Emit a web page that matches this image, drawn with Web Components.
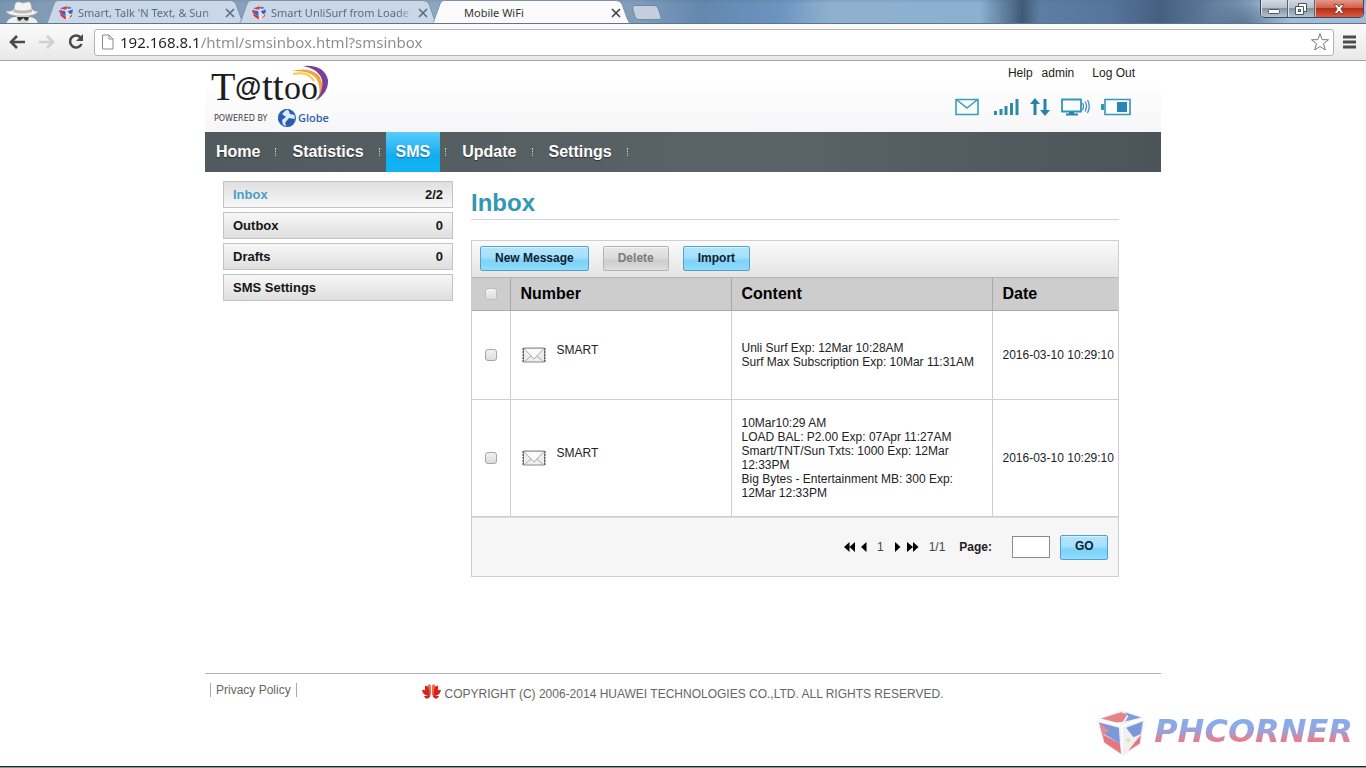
<!DOCTYPE html>
<html lang="en">
<head>
<meta charset="utf-8">
<title>Mobile WiFi</title>
<style>
  body { margin: 0; background: #fff; color: #222; font: 12px/14px "Liberation Sans", Arial, sans-serif; }
</style>
</head>
<body>
<wifi-window></wifi-window>

<script>
const define = (name, html, setup) => {
  const template = document.createElement('template');
  template.innerHTML = `<style>*{box-sizing:border-box} a{color:inherit;text-decoration:none} svg{display:block} button,input{font:inherit;margin:0}</style>` + html;
  customElements.define(name, class extends HTMLElement {
    constructor() {
      super();
      this.attachShadow({ mode: 'open' }).append(template.content.cloneNode(true));
      if (setup) setup.call(this, this.shadowRoot);
    }
  });
};

/* ---------- shared pieces ---------- */

define('cube-icon', `
<style>:host{display:block;width:16px;height:16px;flex:none} svg{width:100%;height:100%}</style>
<svg viewBox="0 0 48 46" aria-hidden="true">
  <path d="M1 9 24 1 47 8 26 15Z" fill="#e8edf6"/>
  <path d="M5 9 24 3 30 5 26 12 20 13Z" fill="#d8404c"/><path d="M28 3 43 8 28 12 31 7Z" fill="#3a6ad0"/>
  <path d="M1 11 24 17 26 45 7 33Z" fill="#e8edf6"/>
  <path d="M3 13 22 18 23 33 6 23Z" fill="#3562c8"/><path d="M6 24 23 33 24 43 8 32Z" fill="#d8303c"/><path d="M3 13 13 21 6 25Z" fill="#d84c58"/>
  <path d="M26 17 47 10 43 34 26 45Z" fill="#e6e9ec"/>
  <path d="M29 18 45 12 43 24 36 27Z" fill="#3562c8"/><path d="M38 31 43 25 42 33 31 40Z" fill="#d8303c"/>
  <circle cx="31" cy="30" r="2" fill="#c8dc70"/>
</svg>`);

define('gloss-button', `
<style>
  :host{display:inline-block}
  button{width:100%;height:25px;padding:0 14px 2px;border:1px solid #4ea3cf;border-radius:2px;font-weight:bold;color:#10212e;
    background:linear-gradient(#b4e5fc 0,#a4e0fc 45%,#7dd2f8 60%,#90dcfc 100%);white-space:nowrap;box-shadow:inset 0 1px #d8f1fb}
  button:disabled{color:#7c7c7c;border-color:#b4b4b4;background:linear-gradient(#e8e8e8,#dadada 50%,#cdcdcd 60%,#dedede);box-shadow:inset 0 1px #f4f4f4}
</style>
<button type="button"><slot></slot></button>`, function (root) {
  root.querySelector('button').disabled = this.hasAttribute('disabled');
});

/* ---------- browser frame ---------- */

define('browser-tab', `
<style>
  :host{display:flex;align-items:center;position:relative;width:202px;height:24px;margin-right:-9px;padding:2px 10px 0 14px;
    font:11px/16px "Noto Sans","Open Sans",sans-serif;color:#5c6b7e;z-index:0}
  .shape{position:absolute;inset:0;width:100%;height:100%;z-index:-1}
  .s{fill:#c9d7e8;stroke:#7f93a9}
  .label{flex:1;margin-left:4px;overflow:hidden;white-space:nowrap;-webkit-mask:linear-gradient(90deg,#000 92%,#0004)}
  button{border:0;background:none;padding:0;width:12px;height:12px;margin-left:8px;color:#5f6f80}
  :host([active]){color:#333;z-index:1}
  :host([active]) .s{fill:#fbfbfb;stroke:#7c93ab}
  :host([active]) button{color:#444}
  :host([active]) cube-icon{display:none}
  :host([active]) .label{margin-left:20px;-webkit-mask:none}
</style>
<svg class="shape" viewBox="0 0 202 24" preserveAspectRatio="none" aria-hidden="true"><path class="s" d="M0 24.500C4 24 4 20 6 15L10 4Q11 .5 14 .5H186Q190 .5 192 4L197 18Q199 24 202 24.500"/></svg>
<cube-icon></cube-icon>
<span class="label"><slot></slot></span>
<button type="button" aria-label="Close tab"><svg width="12" height="12" viewBox="0 0 12 12"><path d="M2 2 10 10M10 2 2 10" stroke="currentColor" stroke-width="1.700"/></svg></button>`);

define('window-controls', `
<style>
  :host{display:flex;width:104px;height:18px;border:1px solid #3d4756;border-top:0;border-radius:0 0 5px 5px;overflow:hidden}
  button{flex:0 0 27px;padding:0;border:0;border-right:1px solid #59636f;display:grid;place-items:center;
   background:linear-gradient(#d2d9e0 0,#b7c0ca 45%,#8793a1 50%,#b4c3d2);box-shadow:inset 1px 0 #dbe3eb}
  button:last-child{flex:1;border:0;background:linear-gradient(#e39a8a 0,#d3604c 45%,#b82c18 50%,#d65c3c);box-shadow:inset 1px 0 #eab0a0}
</style>
<button type="button" aria-label="Minimize"><svg width="14" height="14"><rect x="1.500" y="7.500" width="11" height="4" rx="1" fill="#fff" stroke="#4c5663"/></svg></button>
<button type="button" aria-label="Restore"><svg width="14" height="14"><path d="M4.500 1.500H12.500V9.500H9.500V12.500H1.500V4.500H4.500Z" fill="#fff" stroke="#4c5663"/><path d="M4.500 4.500H9.500V9.500" fill="none" stroke="#4c5663"/><rect x="4.500" y="7.500" width="2" height="2" fill="#aab4bf" stroke="#4c5663"/></svg></button>
<button type="button" aria-label="Close"><svg width="16" height="14"><path d="M3 2.500h3L8 5l2-2.500h3L9.800 7l3.200 4.500h-3L8 9l-2 2.500H3L6.200 7Z" fill="#fff" stroke="#6b2c26" stroke-width=".8"/></svg></button>`);

define('tab-strip', `
<style>
  :host{display:flex;height:24px;position:relative;overflow:hidden;
    background:linear-gradient(#4d647e30,transparent 15%),
    radial-gradient(ellipse 50px 30px at 1240px 24px,#5d7591,transparent),
    linear-gradient(90deg,#7995b0 0,#829cb8 40px,#8ca7c2 440px,#7f9dbb 640px,#6487ae 700px,#6b94bf 780px,#8fb1d0 830px,#8bb0d0 980px,#53708f 1012px,#3f5973 1022px,#5d7ea4 1040px,#56759b 1110px,#465f80 1160px,#587596 1200px,#7796b7 1235px,#a0bfdc 1262px,#9fbddb);
    border-bottom:1px solid #60758c}
  .hat{width:44px;flex:none}
  .new{border:0;padding:0;background:none;width:36px;height:18px;margin:4px 0 0 7px;position:relative}
  window-controls{margin-left:auto;margin-right:2px}
</style>
<svg class="hat" height="24" viewBox="0 0 44 24" aria-hidden="true">
  <path d="M6 24Q8 18 14 17H30Q37 18 38 24Z" fill="#f1f1ee"/><path d="M16 14H29V22L23 24 17 22Z" fill="#d9d8d2"/>
  <path d="M6 11Q12 12 14 9L15 4Q16 1 20 2L23 3 27 2Q30 1 31 4L32 9Q34 12 38 11 37 16 22 16T6 11Z" fill="#f4f3ef" stroke="#99a0a6" stroke-width=".6"/>
  <path d="M14 9Q22 12 32 9V12Q22 15 13 12Z" fill="#b9babb"/>
  <path d="M17 17H29L28 20Q26 22 24 19L23 18 22 19Q20 22 18 20Z" fill="#33373b"/>
</svg>
<browser-tab>Smart, Talk 'N Text, &amp; Sun</browser-tab>
<browser-tab>Smart UnliSurf from Loade</browser-tab>
<browser-tab active>Mobile WiFi</browser-tab>
<button class="new" type="button" aria-label="New tab"><svg width="36" height="18"><path d="M2.500 4Q2 1.500 5 1.500H24Q27 1.500 28 4L31 13Q32 15.500 29 15.500H9Q6 15.500 5 13Z" fill="#c3cfdf" stroke="#71879e"/></svg></button>
<window-controls></window-controls>`);

define('address-bar', `
<style>
  :host{display:flex;align-items:center;height:37px;padding:0 7px 0 8px;border-bottom:1px solid #a5a5a5;background:linear-gradient(#fbfbfb,#e9e9e9)}
  button{border:0;background:none;padding:0;width:20px;height:20px;flex:none}
  .nav{display:flex;gap:9px;width:86px}
  .box{flex:1;display:flex;align-items:center;height:27px;padding:0 3px 0 6px;border:1px solid #b4b4b4;border-radius:3px;background:#fff}
  input{flex:1;min-width:0;height:24px;border:0;outline:0;padding:0;margin-left:6px;font:15px/24px "Noto Sans","Open Sans",sans-serif;
    color:transparent;background:linear-gradient(90deg,#222 79px,#8b8b8b 79px);-webkit-background-clip:text;background-clip:text}
  .menu{margin-left:5px}
</style>
<div class="nav">
  <button type="button" aria-label="Back"><svg width="20" height="20"><path d="M17 10H3M9 4 3 10 9 16" fill="none" stroke="#4a4a4a" stroke-width="2.600"/></svg></button>
  <button type="button" aria-label="Forward"><svg width="20" height="20"><path d="M2 10H16M10 4 16 10 10 16" fill="none" stroke="#cfcfcf" stroke-width="2.600"/></svg></button>
  <button type="button" aria-label="Reload"><svg width="20" height="20"><path d="M14.500 5.500A6 6 0 1 0 15.500 12" fill="none" stroke="#4a4a4a" stroke-width="2.600"/><path d="M17 2V9H10Z" fill="#4a4a4a"/></svg></button>
</div>
<div class="box">
  <svg width="13" height="16"><path d="M1.500 1H8L12 5V15H1.500ZM8 1V5H12" fill="#fff" stroke="#8a8a8a"/></svg>
  <input type="text" aria-label="Address" value="192.168.8.1/html/smsinbox.html?smsinbox" spellcheck="false">
  <button type="button" aria-label="Bookmark this page"><svg width="20" height="20"><path d="M10 1.500 12.200 7.600 18.500 7.800 13.500 11.700 15.300 18 10 14.400 4.700 18 6.500 11.700 1.500 7.800 7.800 7.600Z" fill="#fff" stroke="#777"/></svg></button>
</div>
<button class="menu" type="button" aria-label="Menu"><svg width="20" height="20"><path d="M4 5H17M4 10H17M4 15H17" stroke="#4c4c4c" stroke-width="3"/></svg></button>`);

/* ---------- device page ---------- */

define('tattoo-logo', `
<style>:host{display:block}</style>
<svg width="124" height="66" viewBox="0 0 124 66" role="img" aria-label="Tattoo powered by Globe">
  <path d="M80 6Q101 1 109 12 115 24 107 36 111 22 105 13 98 5 80 6Z" fill="#f0a43c"/>
  <path d="M92 1Q113 -1 117 15 118 28 104 36 113 26 111 15 108 4 92 1Z" fill="#7c3f98"/>
  <path d="M82 9Q97 6 103 16" fill="none" stroke="#f5cb4a" stroke-width="2"/>
  <g fill="#1d1d1f" font-family="Liberation Serif,serif"><text x="0" y="35" font-size="40">T</text><text x="24" y="31" font-family="Liberation Sans,sans-serif" font-weight="bold" font-size="27">@</text><text x="51" y="35" font-size="39">tt</text><text x="73" y="34" font-size="34">oo</text></g>
  <text x="3" y="56" font-family="DejaVu Sans,sans-serif" font-size="8" fill="#444">POWERED BY</text>
  <circle cx="76" cy="53" r="9" fill="#dce9f7"/>
  <path d="M76 44A9 9 0 0 0 68 57L72 60 71 55 75 52 71 49ZM77 44 79 49 84 50A9 9 0 0 0 77 44ZM78 53 84 54Q83 61 76 62L74 58Z" fill="#2c5cae"/>
  <circle cx="76" cy="53" r="8.500" fill="none" stroke="#3565b4" stroke-width="1.200"/>
  <text x="87" y="57" font-family="Open Sans,sans-serif" font-size="11" font-weight="600" fill="#2b62a8">Globe</text>
</svg>`);

define('status-icons', `
<style>:host{display:flex;align-items:center;height:20px} svg{margin-left:14px} .near{margin-left:11px}</style>
<svg width="24" height="18" viewBox="0 0 24 18" role="img" aria-label="Messages"><path d="M1 1.500H23V16.500H1ZM2 2 12 10 22 2" fill="none" stroke="#3a9fba" stroke-width="1.600"/></svg>
<svg width="26" height="18" viewBox="0 0 26 18" role="img" aria-label="Signal"><path d="M2.500 17V13M8 17V11M13 17V8M18.500 17V5M24 17V1" stroke="#2e89ab" stroke-width="3"/></svg>
<svg class="near" width="20" height="18" viewBox="0 0 20 18" role="img" aria-label="Traffic"><path d="M5 0 10 6H6.500V17H3.500V6H0ZM15 18 10 12H13.500V1H16.500V12H20Z" fill="#2584ac"/></svg>
<svg class="near" width="29" height="18" viewBox="0 0 29 18" role="img" aria-label="WiFi clients"><path d="M1 1.500H20V13.500H1Z" fill="none" stroke="#2f97b8" stroke-width="1.800"/><path d="M8 14H13V15.500H17V17.500H5V15.500H8Z" fill="#2584ac"/><path d="M21.500 5Q23.500 8 21.500 12M24 3.500Q27 8 24 13.500M26.500 2Q30 8 26.500 15" fill="none" stroke="#3a8fc0" stroke-width="1.300"/></svg>
<svg class="near" width="30" height="18" viewBox="0 0 30 18" role="img" aria-label="Battery"><path d="M4 1.500H29V16.500H4Z" fill="#fff" stroke="#2f97b8" stroke-width="1.600"/><path d="M0 6H3V12H0Z" fill="#2f97b8"/><path d="M16 4H26V14H16Z" fill="#2a86b4"/></svg>`);

define('page-header', `
<style>
  :host{display:flex;justify-content:space-between;height:71px;padding:4px 26px 0 6px;background:linear-gradient(#fff 30%,#f6f6f8)}
  .side{display:flex;flex-direction:column;align-items:flex-end;gap:16px;padding-top:1px}
  nav{display:flex;gap:9px;color:#222;line-height:15px} nav a:last-child{margin-left:9px}
  status-icons{margin-right:4px}
</style>
<tattoo-logo></tattoo-logo>
<div class="side">
  <nav><a href="#help">Help</a><a href="#admin">admin</a><a href="#logout">Log Out</a></nav>
  <status-icons></status-icons>
</div>`);

define('main-nav', `
<style>
  :host{display:flex;height:40px;padding-left:1px;background:linear-gradient(90deg,#515b5e,#5a6466 60%,#4b5558)}
  a{display:flex;align-items:center;padding:0 10px;font:bold 16px/20px "Liberation Sans",Arial,sans-serif;color:#fff;text-shadow:0 1px 1px #222c}
  a.on{background:linear-gradient(#5accfb,#12adf0 60%,#0fb4f5);text-shadow:0 1px 1px #1b6d99}
  i{width:12px;padding-left:5px;display:flex;align-items:center}
  i::before{content:"";height:8px;border-left:1px dotted #ccd2d3}
</style>
<a href="#home">Home</a><i></i><a href="#statistics">Statistics</a><i></i><a class="on" href="#sms">SMS</a><i></i><a href="#update">Update</a><i></i><a href="#settings">Settings</a><i></i>`);

define('side-menu', `
<style>
  :host{display:flex;flex-direction:column;gap:4px;width:230px;flex:none}
  a{display:flex;justify-content:space-between;align-items:center;height:27px;padding:0 9px;border:1px solid #c3c3c3;
    background:linear-gradient(#f7f7f7,#dedede);font-size:13px;font-weight:bold;color:#151515}
  .on{background:linear-gradient(#dfdfdf,#f8f8f8)} .on span{color:#4b9fc4}
</style>
<a class="on" href="#inbox"><span>Inbox</span><b>2/2</b></a>
<a href="#outbox"><span>Outbox</span><b>0</b></a>
<a href="#drafts"><span>Drafts</span><b>0</b></a>
<a href="#sms-settings"><span>SMS Settings</span></a>`);

const envelope = `<svg class="mail" width="24" height="16" viewBox="0 0 24 16" role="img" aria-label="Read message"><path d="M1.500 1H22.500V15H1.500Z" fill="#ededed" stroke="#8a8a8a"/><path d="M2 1.500 12 12 22 1.500Z" fill="#fafafa" stroke="#aaa"/><path d="M2 15 9 9M22 15 15 9" stroke="#aaa"/><path d="M1 1V16M23 1V16" stroke="#444" stroke-dasharray="2 1"/></svg>`;

define('message-table', `
<style>
  :host{display:block}
  table{width:100%;table-layout:fixed;border-collapse:collapse}
  th,td{padding:0 0 0 10px;text-align:left;border-left:1px solid #cfcfcf;border-bottom:1px solid #cfcfcf}
  th:first-child,td:first-child{border-left:0;padding:0;text-align:center}
  th{height:33px;font-size:16px;line-height:20px;color:#000;background:#cdcdcd;border-color:#a9a9a9;border-top:1px solid #b5b5b5}
  td{height:89px} tr.tall td{height:117px}
  td:nth-child(3){padding-right:9px} td:last-child{white-space:nowrap}
  .pick{width:38px} .num{width:221px} .txt{width:261px}
  input{appearance:none;display:block;margin:0 auto;width:12px;height:12px;border:1px solid #a6a6a6;border-radius:3px;background:linear-gradient(#f2f2f2,#dcdcdc)}
  th input{border-color:#bdbdbd}
  .from{display:flex;align-items:center;gap:11px;padding-left:1px} .from span{padding-bottom:10px}
</style>
<table>
  <colgroup><col class="pick"><col class="num"><col class="txt"><col></colgroup>
  <thead><tr><th><input type="checkbox" aria-label="Select all"></th><th>Number</th><th>Content</th><th>Date</th></tr></thead>
  <tbody>
    <tr><td><input type="checkbox" aria-label="Select message 1"></td><td><div class="from">${envelope}<span>SMART</span></div></td>
      <td>Unli Surf Exp: 12Mar 10:28AM<br>Surf Max Subscription Exp: 10Mar 11:31AM</td><td>2016-03-10 10:29:10</td></tr>
    <tr class="tall"><td><input type="checkbox" aria-label="Select message 2"></td><td><div class="from">${envelope}<span>SMART</span></div></td>
      <td>10Mar10:29 AM<br>LOAD BAL: P2.00 Exp: 07Apr 11:27AM<br>Smart/TNT/Sun Txts: 1000 Exp: 12Mar 12:33PM<br>Big Bytes - Entertainment MB: 300 Exp: 12Mar 12:33PM</td><td>2016-03-10 10:29:10</td></tr>
  </tbody>
</table>`);

define('page-switcher', `
<style>
  :host{display:flex;align-items:center;justify-content:flex-end;height:59px;padding:0 10px;background:#f6f6f6;border-top:1px solid #dadada;color:#444}
  button{border:0;background:none;padding:0;margin-right:6px}
  .cur{margin:0 10px 0 4px} .total{margin:0 14px 0 4px}
  label{font-weight:bold;color:#222;margin-right:20px}
  input{width:38px;height:22px;border:1px solid #8c8c8c;background:#fff;padding:0 4px;margin-right:10px}
  gloss-button{width:48px}
</style>
<button type="button" aria-label="First page"><svg width="11" height="10"><path d="M5.500 0V10L0 5ZM11 0V10L5.500 5Z"/></svg></button>
<button type="button" aria-label="Previous page"><svg width="6" height="10"><path d="M5.500 0V10L0 5Z"/></svg></button>
<span class="cur">1</span>
<button type="button" aria-label="Next page"><svg width="7" height="10"><path d="M1 0V10L6.500 5Z"/></svg></button>
<button type="button" aria-label="Last page"><svg width="12" height="10"><path d="M0 0V10L6 5ZM6 0V10L11.500 5Z"/></svg></button>
<span class="total">1/1</span>
<label for="page">Page:</label><input id="page" type="text">
<gloss-button>GO</gloss-button>`);

define('inbox-panel', `
<style>
  :host{display:block;flex:1;min-width:0}
  h1{margin:0 0 20px;padding:8px 0 2px;font-size:24px;line-height:28px;color:#3298b2;border-bottom:1px solid #d3d3d3}
  section{border:1px solid #cfcfcf}
  .bar{display:flex;gap:14px;height:36px;padding:5px 8px;background:linear-gradient(#fafafa,#e4e4e4)}
</style>
<h1>Inbox</h1>
<section>
  <div class="bar"><gloss-button>New Message</gloss-button><gloss-button disabled>Delete</gloss-button><gloss-button>Import</gloss-button></div>
  <message-table></message-table>
  <page-switcher></page-switcher>
</section>`);

define('page-footer', `
<style>
  :host{display:grid;grid-template-columns:1fr auto 1fr;border-top:1px solid #b3b3b3;color:#666;padding-top:9px}
  .policy{justify-self:start;margin-left:5px;height:14px;padding:0 5px;border:solid #aaa;border-width:0 1px}
  p{display:flex;align-items:flex-start;gap:3px;margin:0}
  p span{padding-top:4px}
</style>
<a class="policy" href="#privacy">Privacy Policy</a>
<p><svg width="19" height="17" viewBox="0 0 19 17" role="img" aria-label="Huawei"><g fill="#d8231b"><path d="M9 13Q4 7 6 2 9 0 9 4ZM10 13Q15 7 13 2 10 0 10 4Z" fill="#ee6a4e"/><path d="M8 13Q2 10 3 3 6 2 7 7ZM11 13Q17 10 16 3 13 2 12 7ZM8 13Q1 13 0 7 3 6 6 10ZM11 13Q18 13 19 7 16 6 13 10ZM8 13H2Q4 18 8 14ZM11 13H17Q15 18 11 14Z"/></g></svg><span>COPYRIGHT (C) 2006-2014 HUAWEI TECHNOLOGIES CO.,LTD. ALL RIGHTS RESERVED.</span></p>`);

define('forum-mark', `
<style>
  :host{display:flex;align-items:center;gap:8px;opacity:.65}
  cube-icon{width:50px;height:48px}
  span{padding-bottom:4px;font:italic bold 32px/36px "DejaVu Sans",sans-serif;color:transparent;background:linear-gradient(#4a7fe0 30%,#7668b8 50%,#e03848 68%);-webkit-background-clip:text;background-clip:text}
</style>
<cube-icon></cube-icon><span>PHCORNER</span>`);

define('wifi-window', `
<style>
  :host{display:flex;flex-direction:column;min-height:100vh;position:relative}
  .page{width:100%;max-width:956px;margin:0 auto}
  main{display:flex;gap:18px;padding:9px 42px 96px 18px}
  forum-mark{position:absolute;right:13px;bottom:11px}
  .edge{margin-top:auto;height:2px;background:linear-gradient(#1c2a2c 50%,#7d9a96 50%)}
</style>
<tab-strip></tab-strip>
<address-bar></address-bar>
<div class="page">
  <page-header></page-header>
  <main-nav></main-nav>
  <main><side-menu></side-menu><inbox-panel></inbox-panel></main>
  <page-footer></page-footer>
</div>
<forum-mark></forum-mark>
<div class="edge"></div>`);
</script>
</body>
</html>
